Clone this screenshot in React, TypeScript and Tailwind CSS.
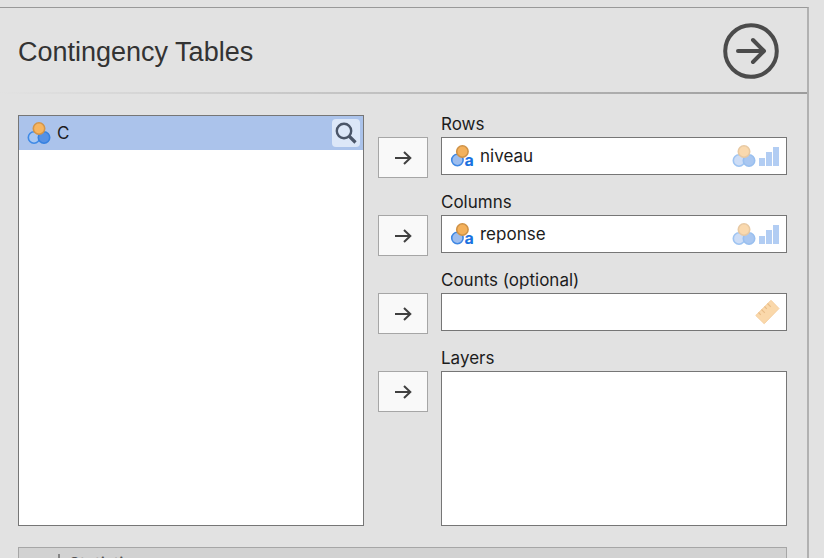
import React from "react";

function NominalIcon({ faded = false }: { faded?: boolean }) {
  return (
    <svg viewBox="0 0 24 24" className={faded ? "size-6 opacity-50" : "size-6"} aria-hidden="true">
      <circle cx="7" cy="16.5" r="5.7" fill={faded ? "#9dbcee" : "#a9c8f2"} stroke="#3f8ae6" strokeWidth="1.6" />
      <circle cx="17" cy="16.5" r="5.7" fill="#5691e4" stroke="#3581e0" strokeWidth="1.6" />
      <circle cx="12" cy="7.5" r="5.7" fill="#f7b55f" stroke="#d2954a" strokeWidth="1.6" />
    </svg>
  );
}

function NominalTextIcon() {
  return (
    <svg viewBox="0 0 24 24" className="size-6 overflow-visible" aria-hidden="true">
      <circle cx="7.4" cy="16" r="5.7" fill="#9dbdee" stroke="#3f88e4" strokeWidth="1.6" />
      <circle cx="12.4" cy="7.5" r="5.7" fill="#f4b15c" stroke="#cf9247" strokeWidth="1.6" />
      <text x="14.6" y="21.6" fontFamily="Inter, Liberation Sans, sans-serif" fontSize="16" fontWeight="700" fill="#1b71e0">
        a
      </text>
    </svg>
  );
}

function OrdinalIcon() {
  return (
    <svg viewBox="0 0 22 22" className="size-[22px]" fill="#b2cdf3" aria-hidden="true">
      <rect x="1" y="13" width="6" height="8" />
      <rect x="8" y="7" width="6" height="14" />
      <rect x="15" y="2" width="6" height="19" />
    </svg>
  );
}

function RulerIcon() {
  return (
    <svg viewBox="0 0 26 26" className="size-[26px]" aria-hidden="true">
      <path d="M17 1.3 25 9.5 10.2 24.7 1.8 16.5Z" fill="#fad8aa" stroke="#f5cfa0" strokeWidth="1" />
      <path d="M4.5 13.5 6.8 15.8M7.5 10.5 10.8 13.8M10.5 7.5 12.8 9.8M13.5 4.5 16.8 7.8" stroke="#e9bd88" strokeWidth="1.2" />
    </svg>
  );
}

function AssignButton({ label }: { label: string }) {
  return (
    <button
      type="button"
      aria-label={label}
      className="mt-[22px] flex h-[41px] w-[50px] shrink-0 items-center justify-center border border-[#a6a6a6] bg-[#f9f9f9]"
    >
      <svg viewBox="0 0 18 16" className="h-4 w-[18px]" fill="none" stroke="#404040" strokeWidth="2" aria-hidden="true">
        <path d="M1 8H16.5M10 2 16.3 8 10 14" />
      </svg>
    </button>
  );
}

type TargetProps = { title: string; variable?: string; allowed?: React.ReactNode; tall?: boolean };

function Target({ title, variable, allowed, tall = false }: TargetProps) {
  const id = `target-${title.split(" ")[0].toLowerCase()}`;
  return (
    <div className={tall ? "flex min-h-0 flex-1 gap-[13px]" : "flex gap-[13px]"}>
      <AssignButton label={`Move to ${title}`} />
      <div className="flex min-w-0 flex-1 flex-col">
        <div id={id} className="h-[22px] leading-[18px]">
          {title}
        </div>
        <div
          role="listbox"
          aria-labelledby={id}
          className={
            tall
              ? "flex-1 border border-[#767676] bg-white"
              : "flex h-[38px] items-center border border-[#767676] bg-white pr-[6px] pl-2"
          }
        >
          {variable && (
            <div role="option" aria-selected="false" className="flex items-center gap-[6px]">
              <NominalTextIcon />
              <span className="pt-[2px]">{variable}</span>
            </div>
          )}
          {allowed && <div className="ml-auto flex items-center gap-[2px]">{allowed}</div>}
        </div>
      </div>
    </div>
  );
}

const nominalOrOrdinal = (
  <>
    <NominalIcon faded />
    <OrdinalIcon />
  </>
);

export default function App() {
  return (
    <div className="h-screen overflow-hidden bg-[#e2e2e2] pt-[7px] pr-[15px] font-['Inter','Liberation_Sans',sans-serif] text-[17px] text-[#1c1c1c]">
      <main className="border-t border-r-2 border-t-[#999] border-r-[#b1b1b1]">
        <header className="flex h-[84px] items-center justify-between pt-[2px] pr-7 pl-[18px]">
          <h1 className="pt-[2px] font-['Liberation_Sans',Arial,sans-serif] text-[27px] text-[#333]">Contingency Tables</h1>
          <button type="button" aria-label="Hide options" className="size-14">
            <svg viewBox="0 0 56 56" className="size-14" fill="none" stroke="#4b4b4b" strokeWidth="4" aria-hidden="true">
              <circle cx="28" cy="28" r="25.8" />
              <path d="M15 28H40M30 17 41 28 30 39" strokeLinecap="round" strokeLinejoin="round" />
            </svg>
          </button>
        </header>
        <div className="h-[2px] bg-linear-to-r from-[#e2e2e2] to-[#9c9c9c]" />

        <div className="pt-[21px] pr-5 pl-[18px]">
          <div className="flex h-[411px] gap-[14px]">
            <div role="listbox" aria-label="Variables" className="min-w-0 flex-1 basis-0 border border-[#767676] bg-white">
              <div className="flex h-[34px] items-center justify-between bg-[#abc3eb] pr-[3px] pl-2">
                <div role="option" aria-selected="true" className="flex items-center gap-[6px]">
                  <NominalIcon />
                  <span className="pt-[2px]">C</span>
                </div>
                <button
                  type="button"
                  aria-label="Search"
                  className="flex size-7 items-center justify-center rounded-sm bg-[#dce7f8]"
                >
                  <svg viewBox="0 0 22 22" className="size-[22px]" fill="none" stroke="#4a5568" aria-hidden="true">
                    <circle cx="9" cy="9" r="7.2" strokeWidth="2.4" />
                    <path d="M14 14 20.5 20.5" strokeWidth="3.2" />
                  </svg>
                </button>
              </div>
            </div>
            <div className="flex min-w-0 flex-1 basis-[65px] flex-col gap-[15px]">
              <Target title="Rows" variable="niveau" allowed={nominalOrOrdinal} />
              <Target title="Columns" variable="reponse" allowed={nominalOrOrdinal} />
              <Target title="Counts (optional)" allowed={<RulerIcon />} />
              <Target title="Layers" tall />
            </div>
          </div>

          <button
            type="button"
            aria-expanded="false"
            className="mt-[21px] flex h-[42px] w-full items-start gap-[9px] border border-[#a6a6a6] bg-[#d2d2d2] pt-1 pl-[39px] text-[#555]"
          >
            <svg viewBox="0 0 2 24" className="mt-[2px] h-6 w-[2px]" fill="#858585" aria-hidden="true">
              <rect width="2" height="24" />
            </svg>
            <span className="leading-6">Statistics</span>
          </button>
        </div>
      </main>
    </div>
  );
}
